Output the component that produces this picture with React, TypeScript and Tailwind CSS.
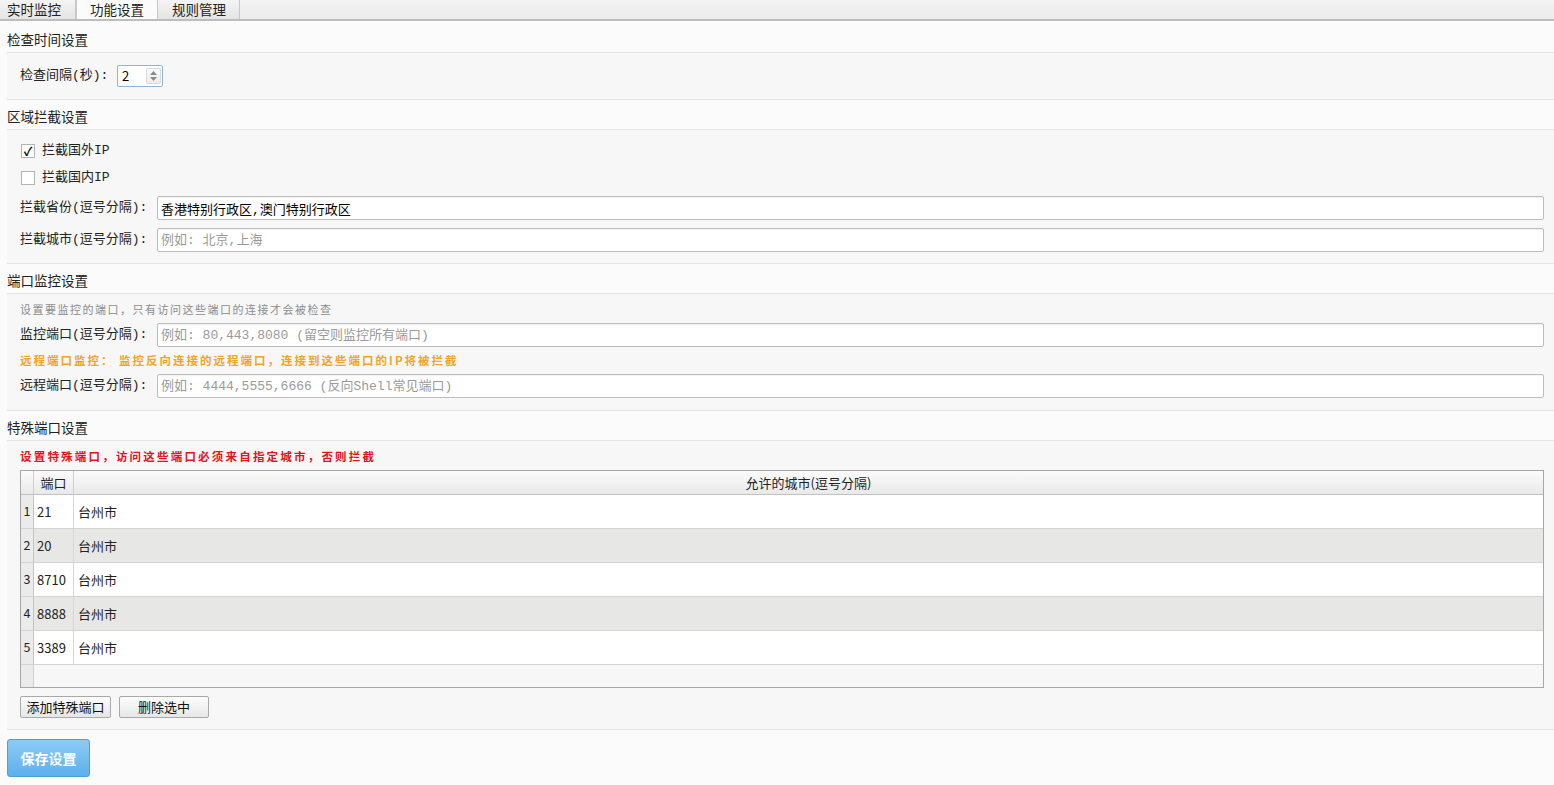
import React from "react";

const cjk = "font-['Noto_Sans_CJK_SC',sans-serif]";
const simLike = "font-['Liberation_Mono','Noto_Sans_CJK_SC',monospace]";

const tabs = [
  { label: "实时监控", cls: "w-[76px] pl-[7px] bg-gradient-to-b from-[#f4f4f4] to-[#e4e4e4]" },
  { label: "功能设置", cls: "w-[82px] pl-[13px] bg-[#fbfbfb] border-l" },
  { label: "规则管理", cls: "w-[82px] pl-[14px] bg-gradient-to-b from-[#f4f4f4] to-[#e4e4e4]" },
];

const specialPorts = [
  { port: "21", cities: "台州市" },
  { port: "20", cities: "台州市" },
  { port: "8710", cities: "台州市" },
  { port: "8888", cities: "台州市" },
  { port: "3389", cities: "台州市" },
];

function SectionTitle({ children }: { children: React.ReactNode }) {
  return (
    <div className="h-[29px] pt-[3px] flex items-center text-[13.5px] text-[#222]">
      {children}
    </div>
  );
}

function Box({ className, children }: { className?: string; children: React.ReactNode }) {
  return (
    <div className={"bg-[#f7f7f7] border-y border-[#e4e4e4] pl-[13px] pr-[10px] " + (className ?? "")}>
      {children}
    </div>
  );
}

function Field({ label, value, placeholder }: { label: string; value?: string; placeholder?: string }) {
  return (
    <div className="flex items-center h-[24px]">
      <span className={"w-[137px] shrink-0 text-[13px] text-[#222] " + simLike}>{label}</span>
      <input
        readOnly
        value={value ?? ""}
        placeholder={placeholder}
        className={
          "flex-1 h-[24px] px-[3px] bg-white border border-[#bdbdbd] rounded-[2px] text-[13px] text-black outline-none placeholder:text-[#9a9a9a] shadow-[inset_0_1px_1px_rgba(0,0,0,0.06)] " +
          simLike
        }
      />
    </div>
  );
}

function Check({ checked, label }: { checked: boolean; label: string }) {
  return (
    <div className="flex items-center h-[24px] pl-[1px]">
      <span className="w-[14px] h-[14px] border border-[#b4b4b4] bg-white flex items-center justify-center text-[12px] font-bold leading-none text-black">
        {checked ? "✓" : ""}
      </span>
      <span className={"ml-[7px] text-[13px] text-[#222] " + simLike}>{label}</span>
    </div>
  );
}

function Btn({ children, w }: { children: React.ReactNode; w: string }) {
  return (
    <button
      className={
        "h-[22px] border border-[#a9a9a9] rounded-[2px] bg-gradient-to-b from-[#fdfdfd] to-[#e6e6e6] text-[13px] text-[#111] flex items-center justify-center " +
        w
      }
    >
      {children}
    </button>
  );
}

export default function App() {
  return (
    <div className={"w-[1554px] h-[785px] overflow-hidden bg-[#fbfbfb] " + cjk}>
      {/* tab strip */}
      <div className="h-[21px] flex items-start bg-gradient-to-b from-[#f3f3f3] to-[#ebebeb] border-b-2 border-[#bdbdbd]">
        {tabs.map((t) => (
          <div
            key={t.label}
            className={"h-[19px] text-[13.5px] leading-[18px] text-[#222] border-r border-[#c8c8c8] " + t.cls}
          >
            {t.label}
          </div>
        ))}
      </div>

      <div className="pl-[7px] pt-[2px]">
        <SectionTitle>检查时间设置</SectionTitle>
        <Box className="h-[48px] flex items-center">
          <span className={"text-[13px] text-[#222] w-[97px] " + simLike}>检查间隔(秒):</span>
          <div className="flex h-[22px] w-[46px] border border-[#8fb4d6] rounded-[2px] bg-white">
            <span className="flex-1 pl-[4px] text-[13px] leading-[20px] text-black">2</span>
            <span className="w-[15px] my-[2px] mr-[1px] border border-[#d4dbe2] rounded-[2px] bg-gradient-to-b from-[#fafafa] to-[#ececec] flex flex-col items-center justify-center gap-[2px]">
              <svg width="7" height="4" viewBox="0 0 7 4"><path d="M0 4 L3.5 0 L7 4 Z" fill="#8a8a8a" /></svg>
              <svg width="7" height="4" viewBox="0 0 7 4"><path d="M0 0 L3.5 4 L7 0 Z" fill="#8a8a8a" /></svg>
            </span>
          </div>
        </Box>

        <SectionTitle>区域拦截设置</SectionTitle>
        <Box className="pt-[9px] pb-[11px] flex flex-col">
          <Check checked label="拦截国外IP" />
          <div className="mt-[3px]">
            <Check checked={false} label="拦截国内IP" />
          </div>
          <div className="mt-[6px]">
            <Field label="拦截省份(逗号分隔):" value="香港特别行政区,澳门特别行政区" />
          </div>
          <div className="mt-[8px]">
            <Field label="拦截城市(逗号分隔):" placeholder="例如: 北京,上海" />
          </div>
        </Box>

        <SectionTitle>端口监控设置</SectionTitle>
        <Box className="pt-[6px] pb-[12px] flex flex-col">
          <div className="h-[18px] flex items-center text-[11px] tracking-[1.5px] text-[#8c8c8c]">
            设置要监控的端口，只有访问这些端口的连接才会被检查
          </div>
          <div className="mt-[5px]">
            <Field label="监控端口(逗号分隔):" placeholder="例如: 80,443,8080 (留空则监控所有端口)" />
          </div>
          <div className="h-[27px] flex items-center text-[11.5px] tracking-[2px] font-bold text-[#f2a427]">
            远程端口监控： 监控反向连接的远程端口，连接到这些端口的IP将被拦截
          </div>
          <Field label="远程端口(逗号分隔):" placeholder="例如: 4444,5555,6666 (反向Shell常见端口)" />
        </Box>

        <SectionTitle>特殊端口设置</SectionTitle>
        <Box className="pt-[6px] pb-[11px] flex flex-col">
          <div className="h-[20px] flex items-center text-[11.5px] tracking-[2.2px] font-bold text-[#e3131b]">
            设置特殊端口，访问这些端口必须来自指定城市，否则拦截
          </div>
          {/* port / city table */}
          <div className="mt-[3px] border border-[#a7a7a7] bg-[#f5f5f5] text-[13px] text-[#222]">
            <div className="flex h-[24px] bg-gradient-to-b from-[#fbfbfb] to-[#e9e9e9] border-b border-[#c2c2c2]">
              <div className="w-[13px] border-r border-[#d0d0d0]" />
              <div className="w-[40px] border-r border-[#cfcfcf] flex items-center justify-center">端口</div>
              <div className="flex-1 flex items-center justify-center">允许的城市(逗号分隔)</div>
            </div>
            {specialPorts.map((r, i) => (
              <div
                key={r.port}
                className={
                  "flex h-[34px] border-b border-[#d3d3d3] " + (i % 2 === 1 ? "bg-[#e7e7e5]" : "bg-white")
                }
              >
                <div className="w-[13px] bg-[#ebebeb] border-r border-[#c4c4c4] flex items-center justify-center text-[12.5px]">
                  {i + 1}
                </div>
                <div className="w-[40px] border-r border-[#d6d6d6] pl-[3px] flex items-center">{r.port}</div>
                <div className="flex-1 pl-[4px] flex items-center">{r.cities}</div>
              </div>
            ))}
            <div className="flex h-[22px]">
              <div className="w-[13px] bg-[#ebebeb] border-r border-[#d0d0d0]" />
              <div className="flex-1 bg-[#f7f7f7]" />
            </div>
          </div>
          <div className="flex gap-[8px] mt-[8px]">
            <Btn w="w-[91px]">添加特殊端口</Btn>
            <Btn w="w-[90px]">删除选中</Btn>
          </div>
        </Box>

        <button className="mt-[9px] w-[83px] h-[38px] rounded-[3px] border border-[#4d9fdc] bg-gradient-to-b from-[#8ccbf5] to-[#5cb0ec] text-white font-bold text-[14px] flex items-center justify-center">
          保存设置
        </button>
      </div>
    </div>
  );
}
